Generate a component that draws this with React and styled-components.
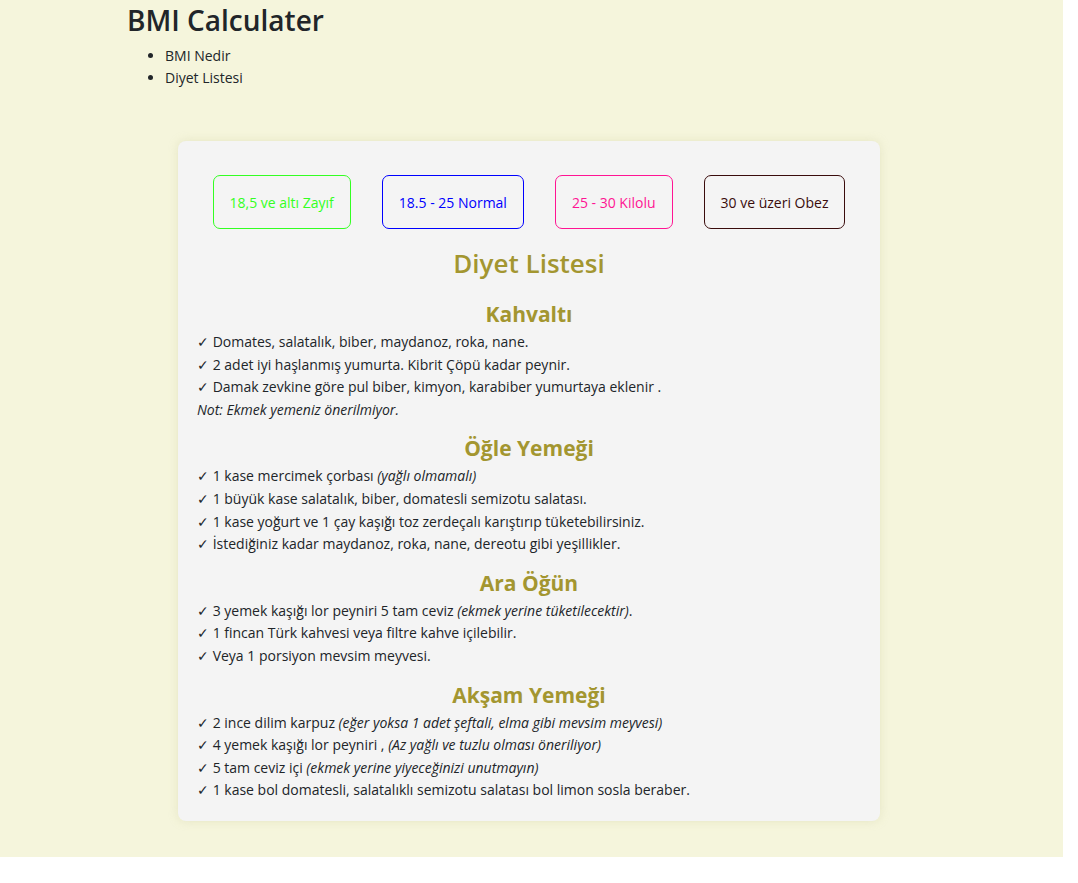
import React from "react";
import styled, { createGlobalStyle } from "styled-components";

const GlobalStyle = createGlobalStyle`
  body {
    margin: 0;
    background: #fff;
    font-family: "Open Sans", "Noto Sans", sans-serif;
    color: #212529;
  }
`;

const Page = styled.div`
  width: 1063px;
  height: 857px;
  background-color: #f5f5dc;
  box-sizing: border-box;
  padding: 0 127px;
`;

const Title = styled.h1`
  margin: 0;
  padding-top: 3px;
  font-size: 28px;
  font-weight: 600;
  line-height: 34px;
  color: #212529;
`;

const NavList = styled.ul`
  margin: 8px 0 0;
  padding-left: 38px;
  font-size: 14px;
  line-height: 22px;
`;

const Card = styled.div`
  width: 702px;
  margin: 52px 0 0 51px;
  box-sizing: border-box;
  padding: 34px 19px 19px;
  background-color: #f4f4f4;
  border-radius: 8px;
  box-shadow: 0 0 10px rgba(200, 200, 150, 0.35);
`;

const Ranges = styled.div`
  display: flex;
  justify-content: center;
  gap: 31px;
`;

const RangeBox = styled.div`
  height: 54px;
  box-sizing: border-box;
  padding: 0 16px;
  display: flex;
  align-items: center;
  border: 1px solid ${p => p.color};
  border-radius: 7px;
  color: ${p => p.color};
  font-size: 14px;
`;

const ListTitle = styled.h2`
  margin: 17px 0 0;
  text-align: center;
  font-size: 26px;
  font-weight: 600;
  line-height: 34px;
  color: #a39630;
`;

const MealTitle = styled.h3`
  margin: ${p => (p.first ? "20px" : "13px")} 0 3px;
  text-align: center;
  font-size: 21px;
  font-weight: 700;
  line-height: 28px;
  color: #a39630;
`;

const Item = styled.div`
  font-size: 14px;
  line-height: 22.6px;
  color: #212529;
`;

const Note = styled.em`
  font-style: italic;
`;

const meals = [
  {
    title: "Kahvaltı",
    items: [
      ["Domates, salatalık, biber, maydanoz, roka, nane."],
      ["2 adet iyi haşlanmış yumurta. Kibrit Çöpü kadar peynir."],
      ["Damak zevkine göre pul biber, kimyon, karabiber yumurtaya eklenir ."]
    ],
    note: "Not: Ekmek yemeniz önerilmiyor."
  },
  {
    title: "Öğle Yemeği",
    items: [
      ["1 kase mercimek çorbası ", "(yağlı olmamalı)"],
      ["1 büyük kase salatalık, biber, domatesli semizotu salatası."],
      ["1 kase yoğurt ve 1 çay kaşığı toz zerdeçalı karıştırıp tüketebilirsiniz."],
      ["İstediğiniz kadar maydanoz, roka, nane, dereotu gibi yeşillikler."]
    ]
  },
  {
    title: "Ara Öğün",
    items: [
      ["3 yemek kaşığı lor peyniri 5 tam ceviz ", "(ekmek yerine tüketilecektir)", "."],
      ["1 fincan Türk kahvesi veya filtre kahve içilebilir."],
      ["Veya 1 porsiyon mevsim meyvesi."]
    ]
  },
  {
    title: "Akşam Yemeği",
    items: [
      ["2 ince dilim karpuz ", "(eğer yoksa 1 adet şeftali, elma gibi mevsim meyvesi)"],
      ["4 yemek kaşığı lor peyniri , ", "(Az yağlı ve tuzlu olması öneriliyor)"],
      ["5 tam ceviz içi ", "(ekmek yerine yiyeceğinizi unutmayın)"],
      ["1 kase bol domatesli, salatalıklı semizotu salatası bol limon sosla beraber."]
    ]
  }
];

const ranges = [
  { label: "18,5 ve altı Zayıf", color: "#33ff22" },
  { label: "18.5 - 25 Normal", color: "#0000ff" },
  { label: "25 - 30 Kilolu", color: "#ff1493" },
  { label: "30 ve üzeri Obez", color: "#3a0c0c" }
];

function App() {
  return (
    <Page>
      <GlobalStyle />
      <Title>BMI Calculater</Title>
      <NavList>
        <li>BMI Nedir</li>
        <li>Diyet Listesi</li>
      </NavList>
      <Card>
        <Ranges>
          {ranges.map(r => (
            <RangeBox key={r.label} color={r.color}>
              {r.label}
            </RangeBox>
          ))}
        </Ranges>
        <ListTitle>Diyet Listesi</ListTitle>
        {meals.map((meal, i) => (
          <div key={meal.title}>
            <MealTitle first={i === 0}>{meal.title}</MealTitle>
            {meal.items.map(([text, note, tail]) => (
              <Item key={text}>
                ✓ {text}
                {note && <Note>{note}</Note>}
                {tail}
              </Item>
            ))}
            {meal.note && (
              <Item>
                <Note>{meal.note}</Note>
              </Item>
            )}
          </div>
        ))}
      </Card>
    </Page>
  );
}

export default App;
